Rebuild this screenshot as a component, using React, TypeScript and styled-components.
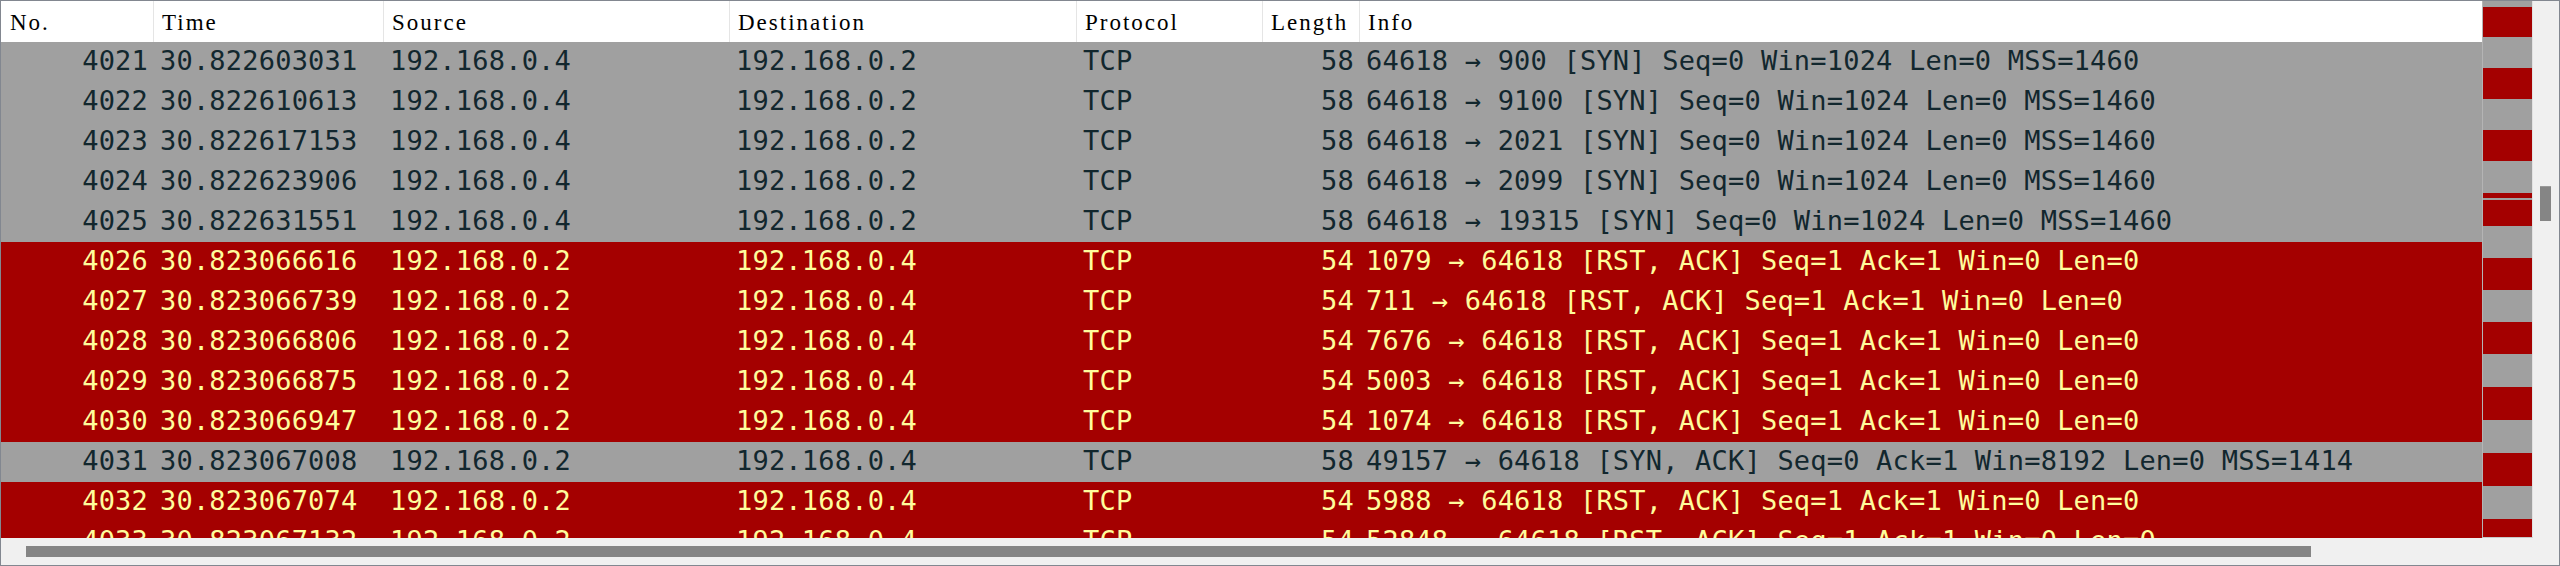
import React from 'react';
import styled, { createGlobalStyle } from 'styled-components';

const GlobalStyle = createGlobalStyle`
  html, body { margin: 0; padding: 0; background: #ffffff; }
  body { width: 2560px; height: 566px; overflow: hidden; }
  * { box-sizing: border-box; }
`;

type Align = 'left' | 'right';
interface Col { key: string; title: string; width: number | null; align: Align }

const COLS: Col[] = [
  { key: 'no', title: 'No.', width: 152, align: 'right' },
  { key: 'time', title: 'Time', width: 230, align: 'left' },
  { key: 'src', title: 'Source', width: 346, align: 'left' },
  { key: 'dst', title: 'Destination', width: 347, align: 'left' },
  { key: 'proto', title: 'Protocol', width: 186, align: 'left' },
  { key: 'len', title: 'Length', width: 97, align: 'right' },
  { key: 'info', title: 'Info', width: null, align: 'left' },
];

type Kind = 'syn' | 'rst';
interface Packet { no: number; time: string; src: string; dst: string; len: number; info: string; kind: Kind }

const syn = (no: number, time: string, port: string): Packet => ({
  no, time, src: '192.168.0.4', dst: '192.168.0.2', len: 58,
  info: `64618 → ${port} [SYN] Seq=0 Win=1024 Len=0 MSS=1460`, kind: 'syn',
});
const rst = (no: number, time: string, port: string): Packet => ({
  no, time, src: '192.168.0.2', dst: '192.168.0.4', len: 54,
  info: `${port} → 64618 [RST, ACK] Seq=1 Ack=1 Win=0 Len=0`, kind: 'rst',
});

const PACKETS: Packet[] = [
  syn(4021, '30.822603031', '900'),
  syn(4022, '30.822610613', '9100'),
  syn(4023, '30.822617153', '2021'),
  syn(4024, '30.822623906', '2099'),
  syn(4025, '30.822631551', '19315'),
  rst(4026, '30.823066616', '1079'),
  rst(4027, '30.823066739', '711'),
  rst(4028, '30.823066806', '7676'),
  rst(4029, '30.823066875', '5003'),
  rst(4030, '30.823066947', '1074'),
  {
    no: 4031, time: '30.823067008', src: '192.168.0.2', dst: '192.168.0.4', len: 58,
    info: '49157 → 64618 [SYN, ACK] Seq=0 Ack=1 Win=8192 Len=0 MSS=1414', kind: 'syn',
  },
  rst(4032, '30.823067074', '5988'),
  rst(4033, '30.823067132', '52848'),
];

// minimap stripes: [kind, height]
const STRIPES: [Kind, number][] = [
  ['syn', 6], ['rst', 30], ['syn', 31], ['rst', 31], ['syn', 31], ['rst', 31], ['syn', 32],
  ['rst', 5], ['syn', 2], ['rst', 26], ['syn', 32], ['rst', 32], ['syn', 32], ['rst', 32],
  ['syn', 33], ['rst', 33], ['syn', 33], ['rst', 33], ['syn', 33], ['rst', 40],
];

const COLORS = {
  syn: { bg: '#a0a0a0', fg: '#12272e' },
  rst: { bg: '#a40000', fg: '#fffc9c' },
};

const Frame = styled.div`
  width: 2560px;
  height: 566px;
  border: 1px solid #828790;
  display: flex;
  flex-direction: column;
  background: #ffffff;
  overflow: hidden;
`;

const TopArea = styled.div`
  flex: 1;
  min-height: 0;
  display: flex;
`;

const Table = styled.div`
  flex: 1;
  min-width: 0;
  display: flex;
  flex-direction: column;
  overflow: hidden;
`;

const HeaderRow = styled.div`
  height: 41px;
  flex-shrink: 0;
  display: flex;
  background: #ffffff;
`;

const HeaderCell = styled.div<{ $w: number | null; $first: boolean }>`
  ${(p) => (p.$w ? `width: ${p.$w}px; flex-shrink: 0;` : 'flex: 1; min-width: 0;')}
  height: 41px;
  border-left: ${(p) => (p.$first ? 'none' : '1px solid #e5e5e5')};
  padding: 3px 0 0 ${(p) => (p.$first ? 9 : 8)}px;
  font-family: "Liberation Serif", "Times New Roman", serif;
  font-size: 23px;
  letter-spacing: 2px;
  line-height: 38px;
  color: #000000;
  white-space: nowrap;
  overflow: hidden;
`;

const Row = styled.div<{ $kind: Kind }>`
  height: 40px;
  flex-shrink: 0;
  display: flex;
  background: ${(p) => COLORS[p.$kind].bg};
  color: ${(p) => COLORS[p.$kind].fg};
  font-family: "DejaVu Sans Mono", "Liberation Mono", monospace;
  font-size: 27px;
  letter-spacing: 0.2px;
`;

const Cell = styled.div<{ $w: number | null; $align: Align }>`
  ${(p) => (p.$w ? `width: ${p.$w}px; flex-shrink: 0;` : 'flex: 1; min-width: 0;')}
  height: 40px;
  line-height: 38px;
  padding: 0 ${(p) => (p.$align === 'right' ? 5 : 7)}px 2px 7px;
  text-align: ${(p) => p.$align};
  white-space: pre;
  overflow: hidden;
`;

const Minimap = styled.div`
  width: 51px;
  flex-shrink: 0;
  display: flex;
  flex-direction: column;
  border-left: 1px solid #b4b4b4;
  border-right: 1px solid #e2e2e2;
  border-bottom: 1px solid #c8c8c8;
  overflow: hidden;
`;

const Stripe = styled.div<{ $kind: Kind; $h: number }>`
  height: ${(p) => p.$h}px;
  flex-shrink: 0;
  background: ${(p) => COLORS[p.$kind].bg};
`;

const VTrack = styled.div`
  width: 26px;
  flex-shrink: 0;
  background: #f0f0f0;
  display: flex;
  flex-direction: column;
`;

const VThumb = styled.div<{ $top: number; $len: number }>`
  margin: ${(p) => p.$top}px 0 0 7px;
  width: 11px;
  height: ${(p) => p.$len}px;
  background: #858585;
  border-top: 1px solid #9a9a9a;
`;

const HTrack = styled.div`
  height: 27px;
  flex-shrink: 0;
  background: #f0f0f0;
  display: flex;
  align-items: flex-start;
  padding-top: 8px;
`;

const HThumb = styled.div<{ $left: number; $len: number }>`
  margin-left: ${(p) => p.$left}px;
  width: ${(p) => p.$len}px;
  height: 11px;
  background: #858585;
`;

const cellValue = (p: Packet, key: string): string => {
  switch (key) {
    case 'no': return String(p.no);
    case 'time': return p.time;
    case 'src': return p.src;
    case 'dst': return p.dst;
    case 'proto': return 'TCP';
    case 'len': return String(p.len);
    default: return p.info;
  }
};

export default function App() {
  return (
    <>
      <GlobalStyle />
      <Frame>
        <TopArea>
          <Table>
            <HeaderRow>
              {COLS.map((c, i) => (
                <HeaderCell key={c.key} $w={c.width} $first={i === 0}>{c.title}</HeaderCell>
              ))}
            </HeaderRow>
            {PACKETS.map((p) => (
              <Row key={p.no} $kind={p.kind}>
                {COLS.map((c) => (
                  <Cell key={c.key} $w={c.width} $align={c.align}>{cellValue(p, c.key)}</Cell>
                ))}
              </Row>
            ))}
          </Table>
          <Minimap>
            {STRIPES.map(([k, h], i) => (
              <Stripe key={i} $kind={k} $h={h} />
            ))}
          </Minimap>
          <VTrack>
            <VThumb $top={185} $len={35} />
          </VTrack>
        </TopArea>
        <HTrack>
          <HThumb $left={25} $len={2285} />
        </HTrack>
      </Frame>
    </>
  );
}
